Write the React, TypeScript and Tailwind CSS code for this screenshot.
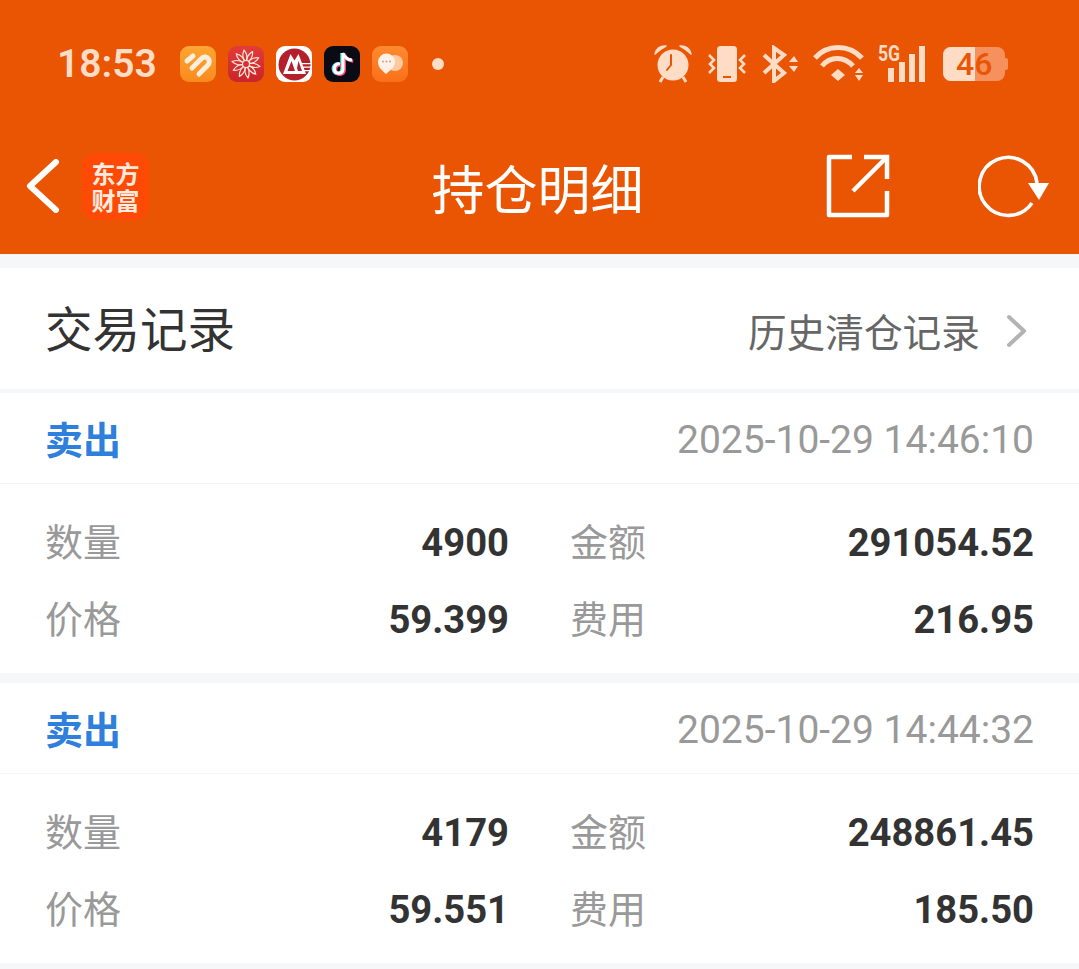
const trades = [
  { time: "2025-10-29 14:46:10", qty: "4900", amount: "291054.52", price: "59.399", fee: "216.95" },
  { time: "2025-10-29 14:44:32", qty: "4179", amount: "248861.45", price: "59.551", fee: "185.50" },
];

const cream = "#ffdcc6";
const orange = "#e95503";

function AppIcons() {
  return (
    <div className="flex items-center gap-[12px] ml-[24px]">
      <div className="w-[36px] h-[36px] rounded-[9px] bg-gradient-to-b from-[#ffa632] to-[#f98a1c]">
        <svg width="36" height="36" viewBox="0 0 36 36" fill="none" stroke="#ffeedd" strokeWidth="5" strokeLinecap="round" strokeLinejoin="round">
          <path d="M7 15 L13 10" />
          <path d="M12 22 L22 12 C27 8.5 32 15 27.5 19.5 L19 28" />
        </svg>
      </div>
      <div className="w-[36px] h-[36px] rounded-[9px] bg-gradient-to-b from-[#e33c38] to-[#c8242a] flex items-center justify-center">
        <svg width="30" height="30" viewBox="0 0 30 30" fill="none" stroke="#ffe6dc" strokeWidth="1.2">
          {[10, 46, 82, 118, 154].map((a) => (
            <path key={a} d="M1 15 C6 11.5 10 12.5 15 15 C10 17.5 6 18.5 1 15 Z M29 15 C24 11.5 20 12.5 15 15 C20 17.5 24 18.5 29 15 Z" transform={`rotate(${a} 15 15)`} />
          ))}
          <circle cx="15" cy="15" r="3.5" fill="#d8302f" />
        </svg>
      </div>
      <div className="w-[36px] h-[36px] rounded-[9px] bg-white flex items-center justify-center">
        <svg width="33" height="33" viewBox="0 0 33 33">
          <circle cx="16.5" cy="16.5" r="16" fill="#b3202c" />
          <path d="M5 26 L12.5 6 L16.5 12.5 L20.5 6 L28 26 Z" fill="#fff" />
          <path d="M9.5 23 L13.5 13 L17 23 Z M19 20 L20.5 13 L24 23 L20 23 Z" fill="#b3202c" />
          <path d="M24 15 H33 V16.2 H24 Z M25 18.5 H33 V19.7 H25 Z M26 22 H32 V23.2 H26 Z" fill="#fff" />
        </svg>
      </div>
      <div className="w-[36px] h-[36px] rounded-[9px] bg-[#0a0b14] flex items-center justify-center">
        <svg width="28" height="30" viewBox="0 0 28 30" fill="none" strokeWidth="3.4">
          <g stroke="#5fe3e6" transform="translate(-1 0)">
            <path d="M15 4 V20 C15 25 8 26 6.5 21 C5.5 17 9 14 12 15" />
            <path d="M15 4 C16 8 20 11 24 11" />
          </g>
          <g stroke="#f4557a" transform="translate(1.2 1)">
            <path d="M15 4 V20 C15 25 8 26 6.5 21 C5.5 17 9 14 12 15" />
            <path d="M15 4 C16 8 20 11 24 11" />
          </g>
          <g stroke="#fff" strokeWidth="3">
            <path d="M15 4 V20 C15 25 8 26 6.5 21 C5.5 17 9 14 12 15" />
            <path d="M15 4 C16 8 20 11 24 11" />
          </g>
        </svg>
      </div>
      <div className="w-[36px] h-[36px] rounded-[9px] bg-gradient-to-b from-[#ff8a30] to-[#f97018] flex items-center justify-center">
        <svg width="30" height="24" viewBox="0 0 30 24">
          <circle cx="20" cy="11" r="8" fill="#ffc9a0" />
          <path d="M11 22 C5 17 3 14 3 10 A8.5 8.5 0 0 1 20 10 C20 14 17 17 11 22 Z" fill="#fff1e6" />
          <circle cx="8" cy="9.5" r="1" fill="#b9a79a" />
          <circle cx="11.5" cy="9.5" r="1" fill="#b9a79a" />
          <circle cx="15" cy="9.5" r="1" fill="#b9a79a" />
        </svg>
      </div>
      <div className="w-[12px] h-[12px] rounded-full bg-[#ffdcc6] ml-[12px]" />
    </div>
  );
}

function SystemIcons() {
  return (
    <div className="flex items-center">
      <svg width="38" height="38" viewBox="0 0 38 38" fill="none">
        <circle cx="19" cy="20" r="15.5" fill={cream} />
        <path d="M17 10 V20 L13 25" stroke={orange} strokeWidth="2" strokeLinecap="round" />
        <path d="M1 9 C2 4 6 0.5 12 1 C8 3 4 6 1 9 Z M37 9 C36 4 32 0.5 26 1 C30 3 34 6 37 9 Z" fill={cream} stroke={cream} strokeWidth="1.5" strokeLinejoin="round" />
        <path d="M9 32 L6 37 M29 32 L32 37" stroke={cream} strokeWidth="3" />
      </svg>
      <svg className="ml-[16px]" width="38" height="38" viewBox="0 0 38 38" fill="none">
        <rect x="9" y="1" width="20" height="36" rx="3.5" fill={cream} />
        <path d="M15 32 H23" stroke={orange} strokeWidth="2" />
        <path d="M1 10 L6 15 L2 19 L6 23 L1 28 M37 10 L32 15 L36 19 L32 23 L37 28" stroke={cream} strokeWidth="2.6" />
      </svg>
      <svg className="ml-[16px]" width="36" height="38" viewBox="0 0 36 38" fill="none">
        <path d="M2 10 L22 28 L12 36 V3 L22 10 L2 28" stroke={cream} strokeWidth="4" />
        <path d="M27 17 L32 11 L36 17 Z M27 21 L32 27 L36 21 Z" fill={cream} />
      </svg>
      <svg className="ml-[15px]" width="51" height="38" viewBox="0 0 51 38" fill="none">
        <path d="M2 13 C14 -1 36 -1 49 13" stroke={cream} strokeWidth="5" />
        <path d="M9 21 C17 11 31 11 40 21" stroke={cream} strokeWidth="5" />
        <path d="M18 30 L25 24 L32 30 L25 36 Z" fill={cream} />
        <path d="M42 28 L46 23 L50 28 Z M42 30 L46 36 L50 30 Z" fill={cream} />
      </svg>
      <div className="relative w-[48px] h-[38px] ml-[14px]">
        <span className="absolute left-0 top-[-4px] origin-left scale-x-[0.8] text-[22px] font-bold leading-[26px] text-[#ffdcc6] font-['Roboto',sans-serif]">5G</span>
        <svg className="absolute left-0 top-0" width="48" height="38" viewBox="0 0 48 38" fill={cream}>
          <rect x="10" y="23" width="6" height="14" />
          <rect x="21" y="17" width="6" height="20" />
          <rect x="31" y="9" width="6" height="28" />
          <rect x="41" y="1" width="6" height="36" />
        </svg>
      </div>
      <div className="relative w-[65px] h-[34px] flex items-center ml-[17px]">
        <div className="w-[62px] h-[34px] rounded-[8px] bg-[#f6905c] overflow-hidden">
          <div className="w-[32px] h-full bg-[#ffdcc6]" />
        </div>
        <div className="w-[3px] h-[12px] rounded-r-[2px] bg-[#f6905c]" />
        <span className="absolute left-[13px] top-0 text-[32px] leading-[34px] font-medium text-[#e95503] font-['Roboto',sans-serif]">46</span>
      </div>
    </div>
  );
}

function Cell({ label, value }: { label: string; value: string }) {
  return (
    <div className="flex items-center justify-between">
      <span className="text-[38px] leading-none text-[#999999]">{label}</span>
      <span className="text-[38.2px] leading-none font-bold text-[#333333] font-['Roboto',sans-serif]">{value}</span>
    </div>
  );
}

export default function App() {
  return (
    <div className="w-[1079px] h-[969px] overflow-hidden bg-[#f6f7f9] font-['Roboto','Noto_Sans_CJK_SC',sans-serif]">
      <header className="h-[254px] bg-[#e95503]">
        <div className="h-[128px] pl-[57px] pr-[71px] flex items-center justify-between">
          <div className="flex items-center">
            <span className="w-[99px] text-[39px] leading-none font-semibold text-[#ffdcc6]">18:53</span>
            <AppIcons />
          </div>
          <SystemIcons />
        </div>
        <div className="h-[116px] grid grid-cols-[1fr_auto_1fr] items-center pl-[26px] pr-[30px]">
          <div className="flex items-center gap-[22px]">
            <svg width="34" height="54" viewBox="0 0 34 54" fill="none">
              <path d="M30 3 L4 27 L30 51" stroke="#fff" strokeWidth="6" strokeLinecap="round" strokeLinejoin="round" />
            </svg>
            <div className="w-[67px] h-[67px] rounded-[14px] bg-[#ff4a06] flex items-center justify-center text-center text-[#ffeadf] text-[24px] leading-[27px] font-bold font-['Noto_Sans_CJK_SC',sans-serif]">
              东方
              <br />
              财富
            </div>
          </div>
          <div className="pt-[12px] text-[53px] leading-none text-white">持仓明细</div>
          <div className="flex items-center justify-end gap-[88px]">
            <svg width="64" height="64" viewBox="0 0 64 64" fill="none" stroke="#fff" strokeWidth="4.5">
              <path d="M26 3 H3 V61 H61 V37" strokeLinejoin="round" />
              <path d="M38 3 H61 V25" />
              <path d="M27 37 L60 4" />
            </svg>
            <svg width="71" height="64" viewBox="0 0 71 64" fill="none">
              <path d="M54 49 A29 29 0 1 1 59 29" stroke="#fff" strokeWidth="3.6" />
              <path d="M50 29 H71 L61 46 Z" fill="#fff" />
            </svg>
          </div>
        </div>
      </header>

      <div className="mt-[14px] h-[121px] pt-[6px] bg-white flex items-center justify-between pl-[45px] pr-[52px]">
        <span className="text-[47.5px] leading-none text-[#333333]">交易记录</span>
        <div className="flex items-center gap-[25px]">
          <span className="pt-[5px] text-[38.7px] leading-none text-[#666666]">历史清仓记录</span>
          <svg width="22" height="34" viewBox="0 0 22 34" fill="none">
            <path d="M4 3 L19 17 L4 31" stroke="#b3b3b3" strokeWidth="4" strokeLinecap="round" strokeLinejoin="round" />
          </svg>
        </div>
      </div>

      <div className="mt-[4px] flex flex-col gap-[10px]">
        {trades.map((t) => (
          <div key={t.time} className="bg-white">
            <div className="h-[91px] pt-[5px] border-b border-[#f5f5f5] flex items-center justify-between px-[45px]">
              <span className="text-[38px] leading-none font-bold text-[#2f7fdc]">卖出</span>
              <span className="text-[39px] leading-none text-[#999999]">{t.time}</span>
            </div>
            <div className="h-[189px] px-[45px] pt-[40px] grid grid-cols-[464px_464px] justify-between content-start gap-y-[39px]">
              <Cell label="数量" value={t.qty} />
              <Cell label="金额" value={t.amount} />
              <Cell label="价格" value={t.price} />
              <Cell label="费用" value={t.fee} />
            </div>
          </div>
        ))}
      </div>
    </div>
  );
}
